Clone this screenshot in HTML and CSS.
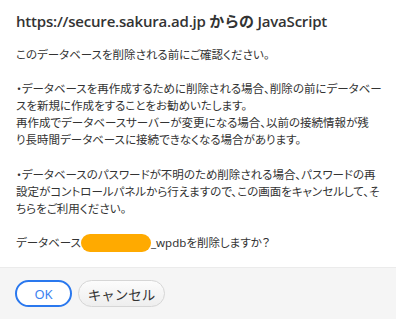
FILE: index.html
```html
<!DOCTYPE html>
<html lang="ja">
<head>
  <meta charset="UTF-8">
  <title>https://secure.sakura.ad.jp からの JavaScript</title>
  <link rel="stylesheet" href="styles.css">
</head>
<body>
  <div class="dialog">
    <div class="dialog-body">
      <h1 class="dialog-title">https://secure.sakura.ad.jp からの JavaScript</h1>
      <div class="message">
        <p>このデータベースを削除される前にご確認ください。</p>
        <p>・データベースを再作成するために削除される場合、削除の前にデータベー<br>スを新規に作成をすることをお勧めいたします。<br>再作成でデータベースサーバーが変更になる場合、以前の接続情報が残<br>り長時間データベースに接続できなくなる場合があります。</p>
        <p>・データベースのパスワードが不明のため削除される場合、パスワードの再<br>設定がコントロールパネルから行えますので、この画面をキャンセルして、そ<br>ちらをご利用ください。</p>
        <p>データベース<span class="masked"></span>_wpdbを削除しますか？</p>
      </div>
    </div>
    <div class="dialog-footer">
      <button class="btn btn-ok">OK</button>
      <button class="btn btn-cancel">キャンセル</button>
    </div>
  </div>
</body>
</html>
```

FILE: styles.css
```css
html, body {
  margin: 0;
  padding: 0;
  background-color: #fff;
}
body {
  font-family: "Noto Sans", "Noto Sans CJK JP", sans-serif;
  color: #333;
}
.dialog {
  width: 396px;
  height: 319px;
  display: flex;
  flex-direction: column;
}
.dialog-body {
  padding: 9px 16px 0;
  height: 258px;
}
.dialog-title {
  font-family: "Open Sans", "Noto Sans CJK JP", sans-serif;
  font-size: 15px;
  font-weight: 600;
  letter-spacing: -0.2px;
  color: #333;
  margin: 0 0 13px;
  line-height: 24px;
}
.message {
  font-size: 11.5px;
  line-height: 17.1px;
  font-feature-settings: "palt";
  white-space: nowrap;
}
.message p {
  margin: 0 0 17.1px;
}
.message p:last-child {
  margin-bottom: 0;
}
.masked {
  display: inline-block;
  width: 70px;
  height: 18px;
  border-radius: 9px;
  background-color: #ffaa00;
  vertical-align: -5px;
}
.dialog-footer {
  flex: 1;
  background-color: #f5f5f5;
  border-top: 1px solid #ebebeb;
  padding: 12px 15px;
  display: flex;
  gap: 6px;
  align-items: flex-start;
}
.btn {
  font-family: "Noto Sans", "Noto Sans CJK JP", sans-serif;
  height: 27px;
  border-radius: 14px;
  cursor: pointer;
}
.btn-ok {
  width: 57px;
  font-size: 13px;
  background-color: #fff;
  color: #3b82f0;
  border: 2px solid #2a78ee;
}
.btn-cancel {
  width: 87px;
  font-size: 13.5px;
  background: linear-gradient(#fcfcfc, #eeeeee);
  color: #333;
  border: 1px solid #d6d6d6;
}
```
